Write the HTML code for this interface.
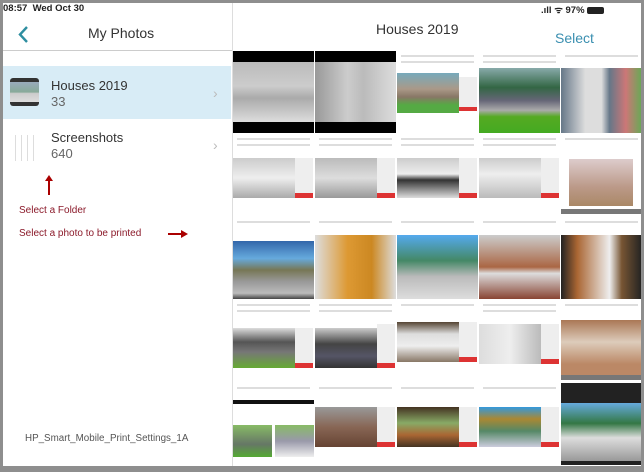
<!DOCTYPE html>
<html><head><style>
*{margin:0;padding:0;box-sizing:border-box}
body{width:644px;height:472px;background:#8e8e8e;position:relative;overflow:hidden;font-family:"Liberation Sans",sans-serif}
.scr{position:absolute;left:3px;top:3px;width:638px;height:463px;background:#fff;overflow:hidden}
.a{position:absolute}
.t{position:absolute;width:81px;height:82px;background:#fff;overflow:hidden}
.t .i{position:absolute}
.bar{position:absolute;left:4px;right:4px;height:2px;background:#ddd}
</style></head><body>
<div class="scr">
<div class="a" style="left:0;top:0;font-size:9.5px;font-weight:bold;color:#222">08:57 &nbsp;Wed Oct 30</div>
<div class="a" style="left:538px;top:0;font-size:9.5px;font-weight:bold;color:#222">.ıll ᯤ 97% <span style="display:inline-block;width:17px;height:7px;background:#222;border-radius:2px;vertical-align:middle"></span></div>
<div class="a" style="left:229px;top:0;width:1px;height:463px;background:#ddd"></div>
<svg class="a" style="left:14px;top:23px" width="12" height="17"><path d="M10 1 L3 8.5 L10 16" stroke="#2e8ea0" stroke-width="2.4" fill="none"/></svg>
<div class="a" style="left:85px;top:22px;font-size:14px;color:#333">My Photos</div>
<div class="a" style="left:0;top:47px;width:229px;height:1px;background:#ccc"></div>
<div class="a" style="left:0;top:63px;width:228px;height:53px;background:#d8ecf6"></div>
<div class="a" style="left:7px;top:75px;width:29px;height:28px;border-radius:3px;background:linear-gradient(#333 0,#333 15%,#9ab 15%,#8a9 50%,#ccc 55%,#ddd 85%,#333 85%)"></div>
<div class="a" style="left:48px;top:75px;font-size:13px;color:#333">Houses 2019</div>
<div class="a" style="left:48px;top:91px;font-size:13px;color:#666">33</div>
<div class="a" style="left:210px;top:82px;font-size:14px;color:#bbb">›</div>
<div class="a" style="left:7px;top:132px;width:29px;height:26px;background:repeating-linear-gradient(90deg,#fff 0 5px,#ddd 5px 6px)"></div>
<div class="a" style="left:48px;top:127px;font-size:13px;color:#333">Screenshots</div>
<div class="a" style="left:48px;top:143px;font-size:13px;color:#666">640</div>
<div class="a" style="left:210px;top:134px;font-size:14px;color:#bbb">›</div>
<div class="a" style="left:45px;top:175px;width:1.5px;height:17px;background:#a00"></div>
<div class="a" style="left:42px;top:172px;border-left:4px solid transparent;border-right:4px solid transparent;border-bottom:6px solid #a00"></div>
<div class="a" style="left:16px;top:202px;font-size:10px;color:#8b1a2a">Select a Folder</div>
<div class="a" style="left:16px;top:225px;font-size:10px;color:#8b1a2a">Select a photo to be printed</div>
<div class="a" style="left:165px;top:230px;width:14px;height:1.5px;background:#a00"></div>
<div class="a" style="left:178px;top:227px;border-top:4px solid transparent;border-bottom:4px solid transparent;border-left:7px solid #a00"></div>
<div class="a" style="left:22px;top:430px;font-size:9.8px;color:#555">HP_Smart_Mobile_Print_Settings_1A</div>
<div class="a" style="left:373px;top:18px;font-size:14px;color:#333">Houses 2019</div>
<div class="a" style="left:552px;top:27px;font-size:14px;color:#3a8fb0">Select</div>

<div class="t" style="left:230px;top:48px;background:#000"><div class="i" style="left:0;top:11px;width:81px;height:60px;background:linear-gradient(#bbb,#ccc 40%,#aaa 60%,#ddd)"></div></div>
<div class="t" style="left:312px;top:48px;background:#000"><div class="i" style="left:0;top:11px;width:81px;height:60px;background:linear-gradient(90deg,#999,#ccc 40%,#bbb 60%,#ddd)"></div></div>
<div class="t" style="left:394px;top:48px"><div class="bar" style="top:4px"></div><div class="bar" style="top:10px"></div><div class="i" style="left:0;top:22px;width:62px;height:40px;background:linear-gradient(#7ab 0,#a98 40%,#876 60%,#5a4 80%)"></div><div class="i" style="left:62px;top:26px;width:18px;height:34px;background:#eee;border-bottom:4px solid #d33"></div></div>
<div class="t" style="left:476px;top:48px"><div class="bar" style="top:4px"></div><div class="bar" style="top:10px"></div><div class="i" style="left:0;top:17px;width:81px;height:65px;background:linear-gradient(#8aa 0,#364 30%,#667 50%,#aaa 65%,#5a2 75%,#4a2)"></div></div>
<div class="t" style="left:558px;top:48px"><div class="bar" style="top:4px"></div><div class="i" style="left:0;top:17px;width:81px;height:65px;background:linear-gradient(90deg,#678 0,#ddd 30%,#ddd 50%,#678 60%,#c77 80%,#6a5)"></div></div>

<div class="t" style="left:230px;top:131px"><div class="bar" style="top:4px"></div><div class="bar" style="top:10px"></div><div class="i" style="left:0;top:24px;width:62px;height:40px;background:linear-gradient(#ccc,#eee 50%,#aaa)"></div><div class="i" style="left:62px;top:24px;width:18px;height:40px;background:#eee;border-bottom:5px solid #d33"></div></div>
<div class="t" style="left:312px;top:131px"><div class="bar" style="top:4px"></div><div class="bar" style="top:10px"></div><div class="i" style="left:0;top:24px;width:62px;height:40px;background:linear-gradient(#bbb,#ddd 50%,#999)"></div><div class="i" style="left:62px;top:24px;width:18px;height:40px;background:#eee;border-bottom:5px solid #d33"></div></div>
<div class="t" style="left:394px;top:131px"><div class="bar" style="top:4px"></div><div class="bar" style="top:10px"></div><div class="i" style="left:0;top:24px;width:62px;height:40px;background:linear-gradient(#ccc,#eee 40%,#333 55%,#ddd)"></div><div class="i" style="left:62px;top:24px;width:18px;height:40px;background:#eee;border-bottom:5px solid #d33"></div></div>
<div class="t" style="left:476px;top:131px"><div class="bar" style="top:4px"></div><div class="bar" style="top:10px"></div><div class="i" style="left:0;top:24px;width:62px;height:40px;background:linear-gradient(#ccc,#eee 40%,#bbb)"></div><div class="i" style="left:62px;top:24px;width:18px;height:40px;background:#eee;border-bottom:5px solid #d33"></div></div>
<div class="t" style="left:558px;top:131px"><div class="bar" style="top:4px"></div><div class="i" style="left:8px;top:25px;width:64px;height:47px;background:linear-gradient(#dcc,#b98 60%,#a86)"></div><div class="i" style="left:0;top:75px;width:81px;height:5px;background:#777"></div></div>

<div class="t" style="left:230px;top:214px"><div class="bar" style="top:4px"></div><div class="i" style="left:0;top:24px;width:81px;height:58px;background:linear-gradient(#36a,#6ad 30%,#775 50%,#999 70%,#bbb 90%,#444)"></div></div>
<div class="t" style="left:312px;top:214px"><div class="bar" style="top:4px"></div><div class="i" style="left:0;top:18px;width:81px;height:64px;background:linear-gradient(90deg,#ddd,#d93 40%,#c82 70%,#ddd)"></div></div>
<div class="t" style="left:394px;top:214px"><div class="bar" style="top:4px"></div><div class="i" style="left:0;top:18px;width:81px;height:64px;background:linear-gradient(#5ae,#486 40%,#bbb 65%,#ddd)"></div></div>
<div class="t" style="left:476px;top:214px"><div class="bar" style="top:4px"></div><div class="i" style="left:0;top:18px;width:81px;height:64px;background:linear-gradient(#ccc,#a64 50%,#ddd 60%,#843)"></div></div>
<div class="t" style="left:558px;top:214px"><div class="bar" style="top:4px"></div><div class="i" style="left:0;top:18px;width:81px;height:64px;background:linear-gradient(90deg,#222,#a63 20%,#eee 60%,#753 75%,#222)"></div></div>

<div class="t" style="left:230px;top:297px"><div class="bar" style="top:4px"></div><div class="bar" style="top:10px"></div><div class="i" style="left:0;top:28px;width:62px;height:40px;background:linear-gradient(#ddd,#555 35%,#777 60%,#6a3)"></div><div class="i" style="left:62px;top:28px;width:18px;height:40px;background:#eee;border-bottom:5px solid #d33"></div></div>
<div class="t" style="left:312px;top:297px"><div class="bar" style="top:4px"></div><div class="bar" style="top:10px"></div><div class="i" style="left:0;top:28px;width:62px;height:40px;background:linear-gradient(#ccc,#444 40%,#556 70%,#333)"></div><div class="i" style="left:62px;top:24px;width:18px;height:44px;background:#eee;border-bottom:5px solid #d33"></div></div>
<div class="t" style="left:394px;top:297px"><div class="bar" style="top:4px"></div><div class="i" style="left:0;top:22px;width:62px;height:40px;background:linear-gradient(#543,#ddd 30%,#eee 60%,#876)"></div><div class="i" style="left:62px;top:22px;width:18px;height:40px;background:#eee;border-bottom:5px solid #d33"></div></div>
<div class="t" style="left:476px;top:297px"><div class="bar" style="top:4px"></div><div class="bar" style="top:10px"></div><div class="i" style="left:0;top:24px;width:62px;height:40px;background:linear-gradient(90deg,#ddd,#eee 50%,#bbb)"></div><div class="i" style="left:62px;top:24px;width:18px;height:40px;background:#eee;border-bottom:5px solid #d33"></div></div>
<div class="t" style="left:558px;top:297px"><div class="bar" style="top:4px"></div><div class="i" style="left:0;top:20px;width:81px;height:55px;background:linear-gradient(#a75,#dcb 40%,#b86 80%)"></div><div class="i" style="left:0;top:75px;width:81px;height:5px;background:#777"></div></div>

<div class="t" style="left:230px;top:380px"><div class="bar" style="top:4px"></div><div class="i" style="left:0;top:17px;width:81px;height:4px;background:#111"></div><div class="i" style="left:0;top:42px;width:39px;height:32px;background:linear-gradient(#8b6,#676 60%,#5a3)"></div><div class="i" style="left:42px;top:42px;width:39px;height:32px;background:linear-gradient(#8b6,#99a 50%,#eee)"></div></div>
<div class="t" style="left:312px;top:380px"><div class="bar" style="top:4px"></div><div class="i" style="left:0;top:24px;width:62px;height:40px;background:linear-gradient(#999,#865 50%,#643)"></div><div class="i" style="left:62px;top:24px;width:18px;height:40px;background:#eee;border-bottom:5px solid #d33"></div></div>
<div class="t" style="left:394px;top:380px"><div class="bar" style="top:4px"></div><div class="i" style="left:0;top:24px;width:62px;height:40px;background:linear-gradient(#432,#8a6 40%,#a63 70%,#432)"></div><div class="i" style="left:62px;top:24px;width:18px;height:40px;background:#eee;border-bottom:5px solid #d33"></div></div>
<div class="t" style="left:476px;top:380px"><div class="bar" style="top:4px"></div><div class="i" style="left:0;top:24px;width:62px;height:40px;background:linear-gradient(#39d,#a83 30%,#586 60%,#ccd)"></div><div class="i" style="left:62px;top:24px;width:18px;height:40px;background:#eee;border-bottom:5px solid #d33"></div></div>
<div class="t" style="left:558px;top:380px;background:#222"><div class="i" style="left:0;top:20px;width:81px;height:58px;background:linear-gradient(#6ad,#374 35%,#ddd 60%,#999)"></div></div>
</div>
</body></html>
